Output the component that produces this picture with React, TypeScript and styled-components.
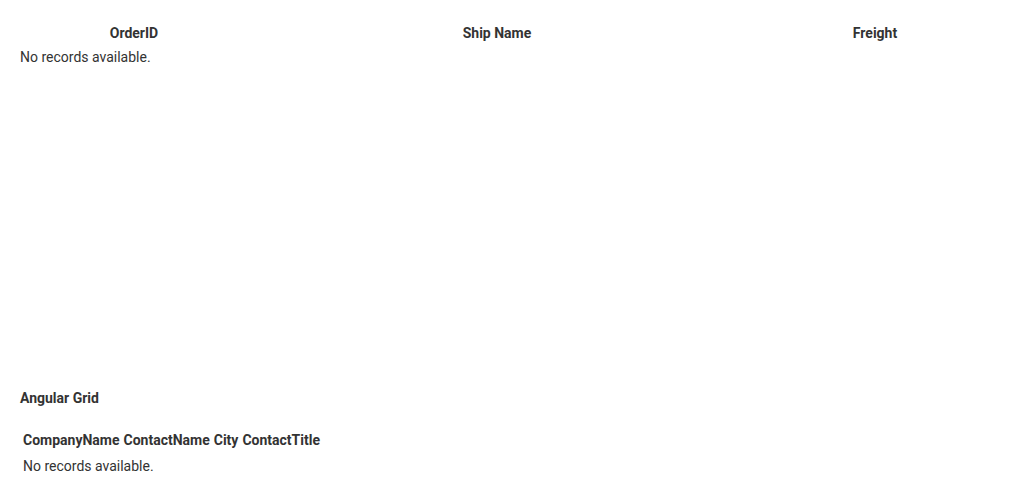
import React from "react";
import styled, { createGlobalStyle } from "styled-components";

const Global = createGlobalStyle`
  body {
    margin: 0;
    font-family: Roboto, "Liberation Sans", Arial, sans-serif;
    font-size: 14px;
    line-height: 20px;
    color: #333;
    background: #fff;
  }
`;

const Page = styled.div`
  padding: 23px 20px 0 20px;
`;

const Grid = styled.div`
  height: 355px;
`;

const GridHeader = styled.div`
  display: grid;
  grid-template-columns: 228px 498px 258px;
  height: 20px;
`;

const HeaderCell = styled.div`
  font-weight: 700;
  text-align: center;
`;

const EmptyRow = styled.div`
  padding-top: 4px;
`;

const Title = styled.div`
  font-weight: 700;
  margin-top: 10px;
`;

const Table = styled.table`
  margin-top: 19px;
  border-spacing: 2px;
  font-size: 14px;
`;

const Th = styled.th`
  padding: 1px;
  font-weight: 700;
  text-align: left;
`;

const Td = styled.td`
  padding: 1px;
  padding-top: 3px;
`;

export default function App() {
  const topCols = ["OrderID", "Ship Name", "Freight"];
  const bottomCols = ["CompanyName", "ContactName", "City", "ContactTitle"];
  return (
    <>
      <Global />
      <Page>
        <Grid>
          <GridHeader>
            {topCols.map((c) => (
              <HeaderCell key={c}>{c}</HeaderCell>
            ))}
          </GridHeader>
          <EmptyRow>No records available.</EmptyRow>
        </Grid>
        <Title>Angular Grid</Title>
        <Table>
          <thead>
            <tr>
              {bottomCols.map((c) => (
                <Th key={c}>{c}</Th>
              ))}
            </tr>
          </thead>
          <tbody>
            <tr>
              <Td colSpan={4}>No records available.</Td>
            </tr>
          </tbody>
        </Table>
      </Page>
    </>
  );
}
